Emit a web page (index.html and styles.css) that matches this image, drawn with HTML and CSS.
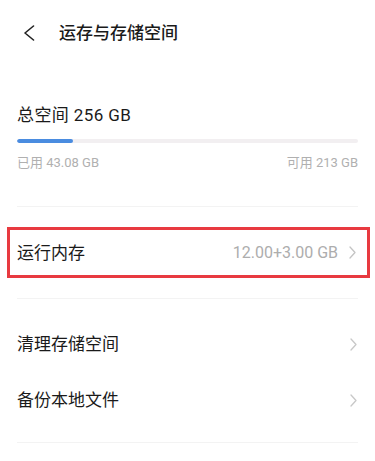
FILE: index.html
```html
<!DOCTYPE html>
<html lang="zh-CN">
<head>
<meta charset="utf-8">
<link rel="stylesheet" href="styles.css">
</head>
<body>
<div class="page">
  <header class="header">
    <svg class="back" width="12" height="16" viewBox="0 0 12 16"><path d="M10.5 1 L2 8 L10.5 15" fill="none" stroke="#222" stroke-width="1.6" stroke-linecap="round" stroke-linejoin="round"/></svg>
    <h1 class="title">运存与存储空间</h1>
  </header>

  <section class="storage">
    <div class="total">总空间 256 GB</div>
    <div class="bar"><div class="fill" style="width:16.4%"></div></div>
    <div class="legend"><span>已用 43.08 GB</span><span>可用 213 GB</span></div>
  </section>
  <div class="divider"></div>

  <div class="row highlight">
    <span class="label">运行内存</span>
    <span class="value">12.00+3.00 GB</span>
    <svg class="chev" width="7" height="13" viewBox="0 0 7 13"><path d="M1 1 L6 6.5 L1 12" fill="none" stroke="#c4c4c4" stroke-width="1.3" stroke-linecap="round" stroke-linejoin="round"/></svg>
  </div>
  <div class="divider d2"></div>

  <div class="list">
    <div class="row item">
      <span class="label">清理存储空间</span>
      <svg class="chev" width="7" height="13" viewBox="0 0 7 13"><path d="M1 1 L6 6.5 L1 12" fill="none" stroke="#c8c8c8" stroke-width="1.3" stroke-linecap="round" stroke-linejoin="round"/></svg>
    </div>
    <div class="row item">
      <span class="label">备份本地文件</span>
      <svg class="chev" width="7" height="13" viewBox="0 0 7 13"><path d="M1 1 L6 6.5 L1 12" fill="none" stroke="#c8c8c8" stroke-width="1.3" stroke-linecap="round" stroke-linejoin="round"/></svg>
    </div>
  </div>
  <div class="divider d3"></div>
</div>
</body>
</html>
```

FILE: styles.css
```css
* { box-sizing: border-box; }
html, body { margin: 0; padding: 0; background: #fff; }
body {
  font-family: Roboto, "Noto Sans CJK SC", sans-serif;
  color: #1c1c1c;
  width: 375px;
  height: 461px;
  overflow: hidden;
}
.header {
  height: 66px;
  display: flex;
  align-items: center;
  padding-left: 23px;
}
.back { display: block; }
.title {
  margin: 0 0 0 24px;
  font-size: 17px;
  font-weight: 500;
  line-height: 24px;
  color: #1a1a1a;
}
.storage {
  padding: 0 17px;
  margin-top: 37px;
}
.total {
  font-size: 17px;
  line-height: 24px;
  color: #1a1a1a;
  letter-spacing: 0.4px;
}
.bar {
  margin-top: 12px;
  height: 4px;
  border-radius: 2px;
  background: #f2eff1;
  overflow: hidden;
}
.fill {
  height: 100%;
  background: #4a8ce0;
  border-radius: 2px;
}
.legend {
  margin-top: 12px;
  display: flex;
  justify-content: space-between;
  font-size: 13px;
  line-height: 16px;
  color: #b0b0b0;
}
.divider {
  height: 1px;
  background: #f3f3f3;
  margin: 35px 17px 0;
}
.row {
  display: flex;
  align-items: center;
}
.label {
  font-size: 17px;
  line-height: 24px;
  color: #1a1a1a;
  flex: 1;
}
.highlight {
  margin: 20px 5px 0 7px;
  height: 51px;
  border: 3px solid #e83a40;
  padding: 0 11px 0 7px;
}
.value {
  font-size: 16px;
  color: #adadad;
  margin-right: 11px;
}
.chev { display: block; flex: none; }
.d2 { margin-top: 20px; }
.list {
  margin-top: 17px;
  padding: 0 18px 0 17px;
}
.item { height: 56px; }
.d3 { margin-top: 14px; }
```
